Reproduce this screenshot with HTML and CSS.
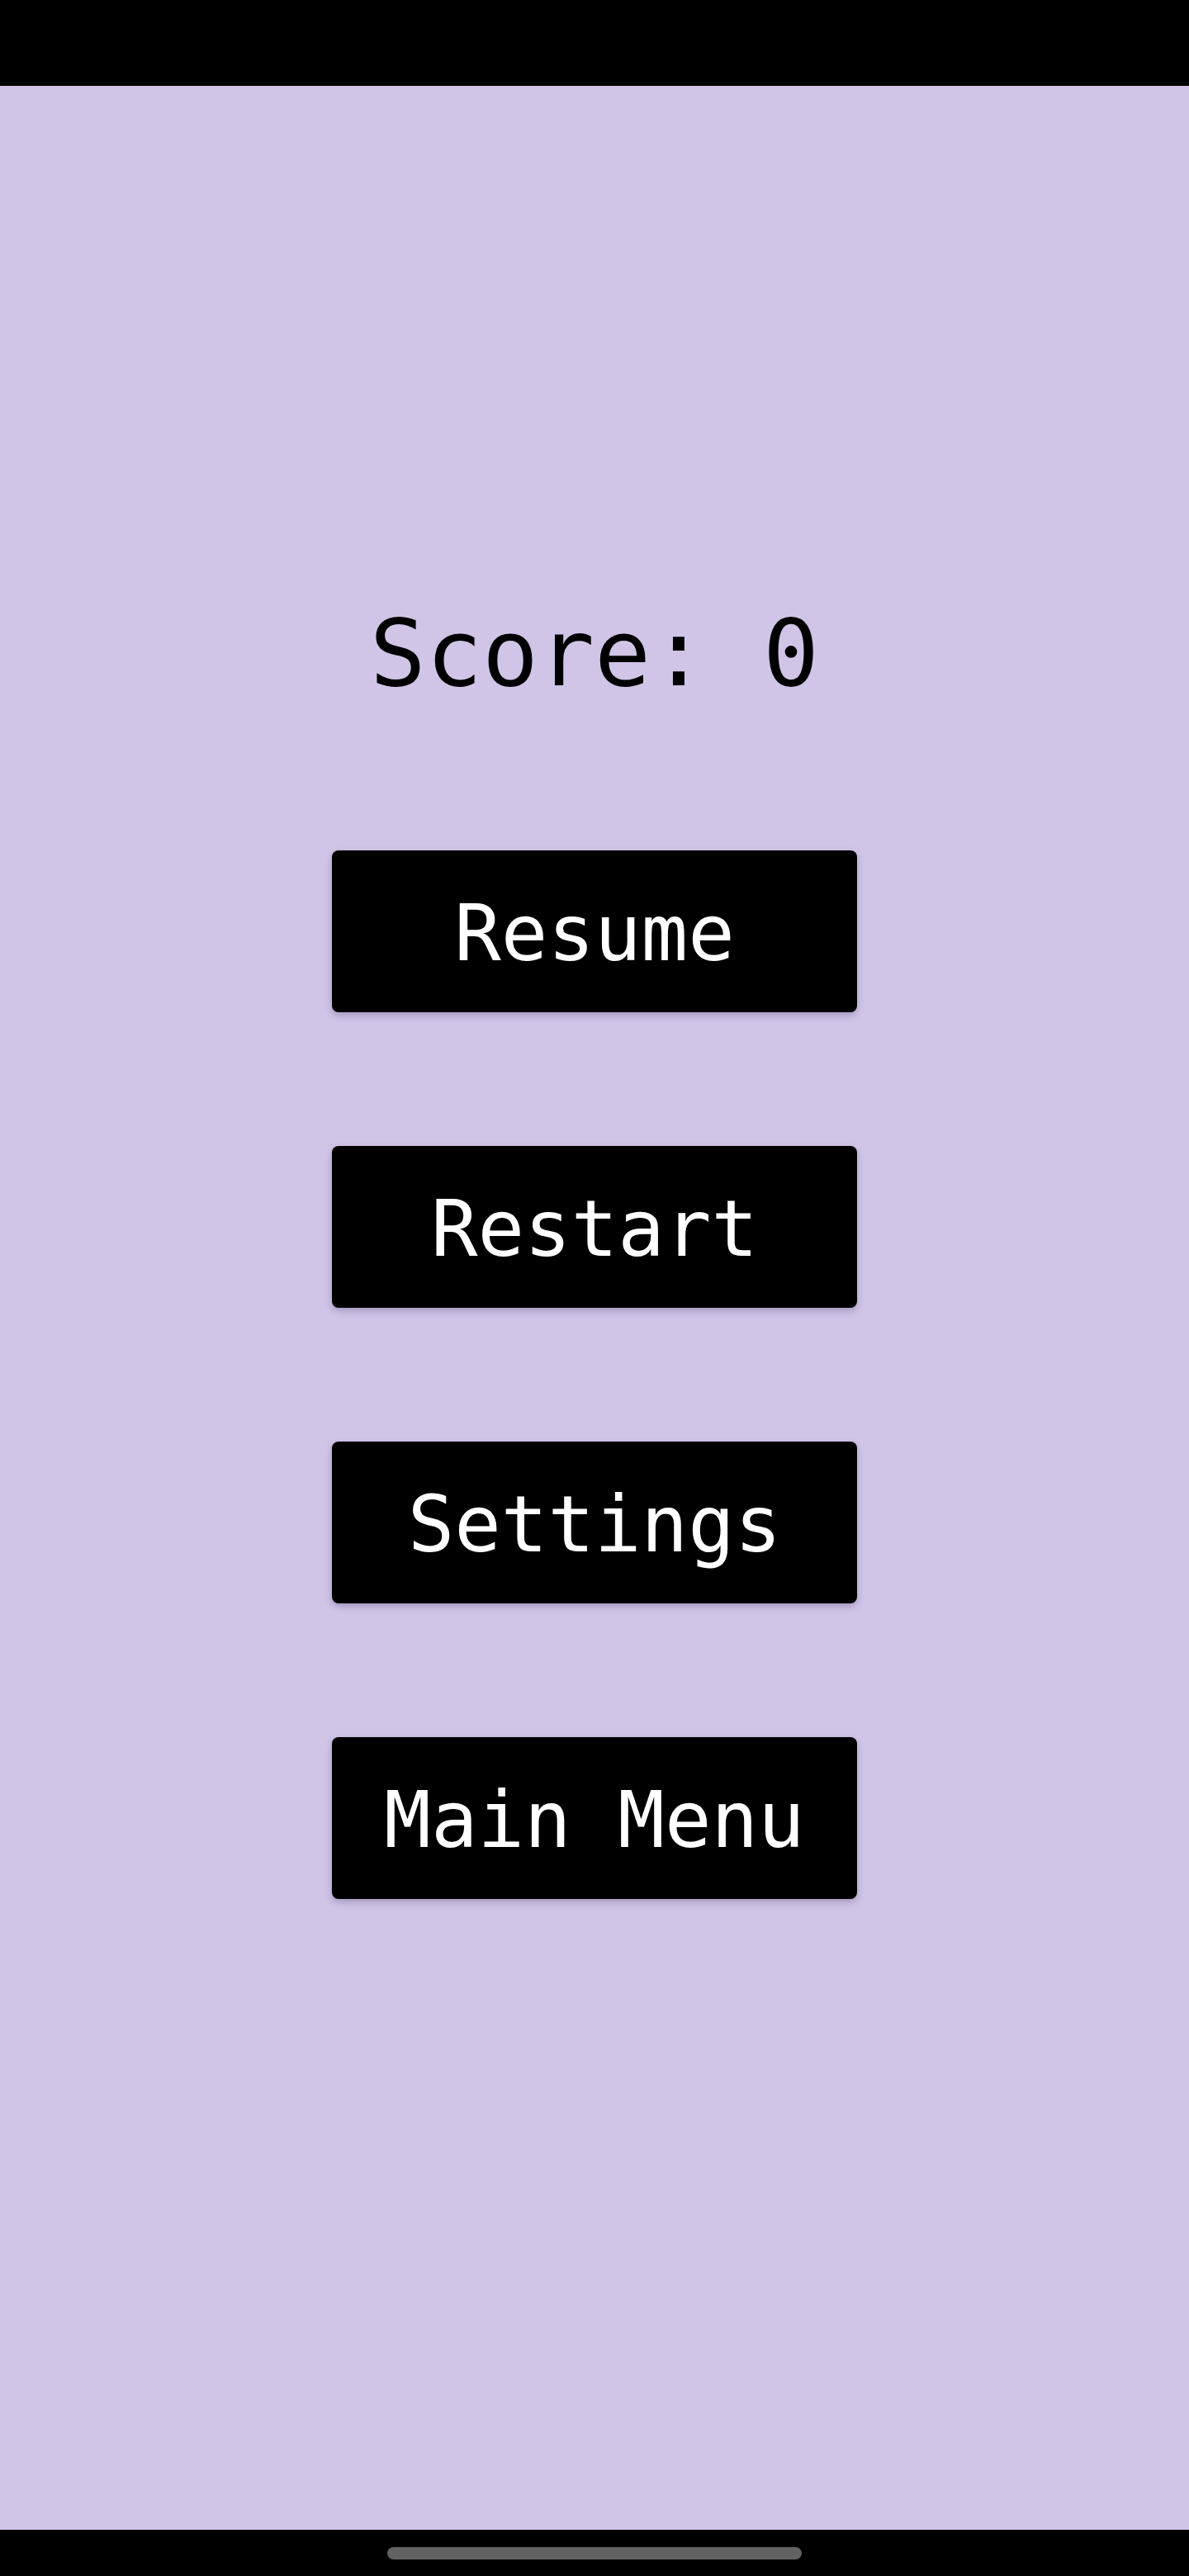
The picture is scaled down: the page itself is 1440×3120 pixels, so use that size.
FILE: index.html
```html
<!DOCTYPE html>
<html lang="en">
<head>
<meta charset="utf-8">
<title>Paused</title>
<link rel="stylesheet" href="styles.css">
</head>
<body>
<div class="screen">
  <div class="status-bar"></div>
  <main class="content">
    <div class="score">Score: 0</div>
    <div class="menu">
      <button class="menu-btn">Resume</button>
      <button class="menu-btn">Restart</button>
      <button class="menu-btn">Settings</button>
      <button class="menu-btn">Main Menu</button>
    </div>
  </main>
  <div class="nav-bar"><div class="home-indicator"></div></div>
</div>
</body>
</html>
```
FILE: styles.css
```css
html, body {
  margin: 0;
  padding: 0;
}
body {
  background: #d1c4e9;
  font-family: "DejaVu Sans Mono", "Liberation Mono", monospace;
}
.screen {
  width: 1440px;
  height: 3120px;
  display: flex;
  flex-direction: column;
  background: #d0c5e7;
}
.status-bar {
  height: 104px;
  background: #000;
  flex: none;
}
.content {
  flex: 1;
  display: flex;
  flex-direction: column;
  align-items: center;
  padding-top: 631px;
}
.score {
  font-size: 113px;
  line-height: 113px;
  height: 113px;
  color: #000;
  white-space: pre;
}
.menu {
  margin-top: 182px;
  display: flex;
  flex-direction: column;
  gap: 162px;
}
.menu-btn {
  width: 636px;
  height: 196px;
  border: none;
  border-radius: 8px;
  background: #000;
  color: #fff;
  font-family: "DejaVu Sans Mono", "Liberation Mono", monospace;
  font-size: 94px;
  line-height: 94px;
  padding: 6px 0 0 0;
  display: flex;
  align-items: center;
  justify-content: center;
  box-shadow: 0 4px 8px rgba(60, 40, 90, 0.28);
  white-space: pre;
}
.nav-bar {
  height: 56px;
  background: #000;
  flex: none;
  display: flex;
  justify-content: center;
  padding-top: 21px;
  box-sizing: border-box;
}
.home-indicator {
  width: 502px;
  height: 15px;
  border-radius: 8px;
  background: #626262;
}
```
